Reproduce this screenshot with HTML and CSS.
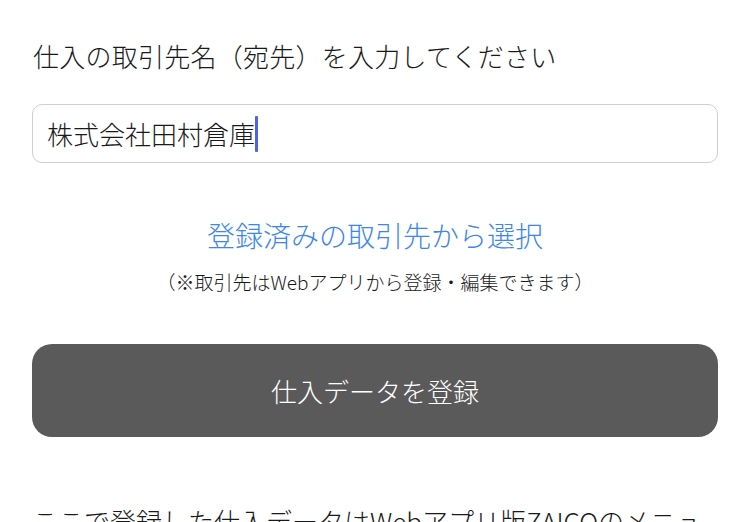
FILE: index.html
```html
<!DOCTYPE html>
<html lang="ja">
<head>
  <meta charset="UTF-8" />
  <meta name="viewport" content="width=device-width, initial-scale=1.0"/>
  <title>仕入登録</title>
  <link rel="stylesheet" href="styles.css">
</head>
<body>
  <div class="page">
    <div class="field-label">仕入の取引先名（宛先）を入力してください</div>

    <div class="text-field">
      <span class="field-value">株式会社田村倉庫</span><span class="caret"></span>
    </div>

    <div class="picker">
      <a class="picker-link" href="#">登録済みの取引先から選択</a>
      <div class="picker-note">（※取引先はWebアプリから登録・編集できます）</div>
    </div>

    <button class="submit-btn">仕入データを登録</button>

    <p class="footnote">ここで登録した仕入データはWebアプリ版ZAICOのメニューから確認できます</p>
  </div>
</body>
</html>
```

FILE: styles.css
```css
:root {
  --text-primary: #1a1a1a;
  --link-color: #3d86ee;
  --border-color: #cfcfcf;
  --button-bg: #5a5a5a;
  --caret-color: #4a63e8;
}

html, body {
  margin: 0;
  height: 100%;
  overflow: hidden;
  background: #ffffff;
}

body {
  font-family: "Noto Sans CJK JP", "Noto Sans", sans-serif;
  font-weight: 300;
  color: var(--text-primary);
}

.page {
  padding: 36px 32px 0;
  display: flex;
  flex-direction: column;
}

.field-label {
  font-size: 26px;
  line-height: 39px;
  padding-left: 1px;
  letter-spacing: 0.25px;
}

.text-field {
  margin-top: 29px;
  height: 59px;
  box-sizing: border-box;
  border: 1px solid var(--border-color);
  border-radius: 10px;
  padding: 0 14px;
  display: flex;
  align-items: center;
  font-size: 26px;
}

.caret {
  width: 3px;
  height: 36px;
  background: var(--caret-color);
  border-radius: 1px;
}

.picker {
  margin-top: 52px;
  display: flex;
  flex-direction: column;
  align-items: center;
}

.picker-link {
  font-size: 28px;
  line-height: 40px;
  color: var(--link-color);
  text-decoration: none;
}

.picker-note {
  margin-top: 13px;
  font-size: 19px;
  line-height: 27px;
}

.submit-btn {
  margin-top: 49px;
  height: 93px;
  border: none;
  border-radius: 20px;
  background: var(--button-bg);
  color: #ffffff;
  font-family: inherit;
  font-weight: 300;
  font-size: 26px;
}

.footnote {
  margin: 64px 0 0;
  font-size: 26px;
  line-height: 39px;
}
```
